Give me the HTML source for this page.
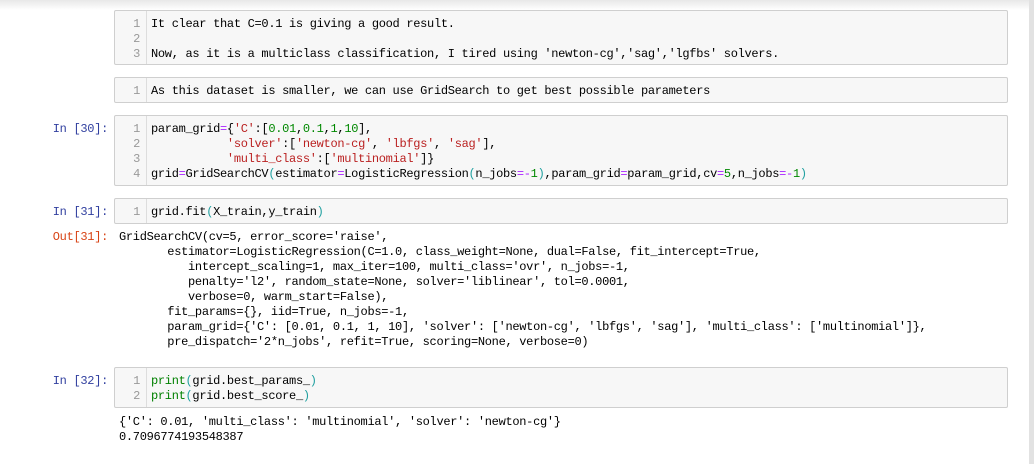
<!DOCTYPE html>
<html><head><style>
body{margin:0;width:1034px;height:464px;background:#fff;position:relative;overflow:hidden;font-family:"Liberation Mono",monospace;font-size:12px;letter-spacing:-0.3px;}
.top{position:absolute;left:0;top:0;width:1029px;height:10px;background:linear-gradient(#e8e8e8,#fff);}
.rb{position:absolute;right:0;top:0;width:5px;height:464px;background:#e2e2e2;}
.cell{position:absolute;left:114px;width:894px;background:#f7f7f7;border:1px solid #cfcfcf;border-radius:2px;box-sizing:border-box;}
.gut{position:absolute;left:0;top:0;bottom:0;width:31px;border-right:1px solid #ddd;}
.ln{position:absolute;right:6px;color:#999;text-align:right;line-height:15px;white-space:pre;}
.code{position:absolute;left:36px;line-height:15px;white-space:pre;color:#000;}
.lbl{position:absolute;right:926px;line-height:15px;color:#303F9F;white-space:pre;}
.out{color:#D84315;}
.o{position:absolute;left:119px;line-height:15px;white-space:pre;color:#000;}
.s{color:#BA2121}.n{color:#080}.p{color:#AA22FF}.b{color:#20a0a0}.k{color:#008000}
</style></head><body>
<div class="top"></div><div class="rb"></div>

<div class="cell" style="top:10px;height:55px"><div class="gut"><div class="ln" style="top:6px">1
2
3</div></div><div class="code" style="top:6px">It clear that C=0.1 is giving a good result.

Now, as it is a multiclass classification, I tired using 'newton-cg','sag','lgfbs' solvers.</div></div>

<div class="cell" style="top:77px;height:26px"><div class="gut"><div class="ln" style="top:6px">1</div></div><div class="code" style="top:6px">As this dataset is smaller, we can use GridSearch to get best possible parameters</div></div>

<div class="lbl" style="top:122px">In [30]:</div>
<div class="cell" style="top:115px;height:71px"><div class="gut"><div class="ln" style="top:6px">1
2
3
4</div></div><div class="code" style="top:6px">param_grid<span class="p">=</span>{<span class="s">'C'</span>:[<span class="n">0.01</span>,<span class="n">0.1</span>,<span class="n">1</span>,<span class="n">10</span>],
           <span class="s">'solver'</span>:[<span class="s">'newton-cg'</span>, <span class="s">'lbfgs'</span>, <span class="s">'sag'</span>],
           <span class="s">'multi_class'</span>:[<span class="s">'multinomial'</span>]}
grid<span class="p">=</span>GridSearchCV<span class="b">(</span>estimator<span class="p">=</span>LogisticRegression<span class="b">(</span>n_jobs<span class="p">=-</span><span class="n">1</span><span class="b">)</span>,param_grid<span class="p">=</span>param_grid,cv<span class="p">=</span><span class="n">5</span>,n_jobs<span class="p">=-</span><span class="n">1</span><span class="b">)</span></div></div>

<div class="lbl" style="top:205px">In [31]:</div>
<div class="cell" style="top:198px;height:26px"><div class="gut"><div class="ln" style="top:6px">1</div></div><div class="code" style="top:6px">grid.fit<span class="b">(</span>X_train,y_train<span class="b">)</span></div></div>

<div class="lbl out" style="top:230px">Out[31]:</div>
<div class="o" style="top:230px">GridSearchCV(cv=5, error_score='raise',
       estimator=LogisticRegression(C=1.0, class_weight=None, dual=False, fit_intercept=True,
          intercept_scaling=1, max_iter=100, multi_class='ovr', n_jobs=-1,
          penalty='l2', random_state=None, solver='liblinear', tol=0.0001,
          verbose=0, warm_start=False),
       fit_params={}, iid=True, n_jobs=-1,
       param_grid={'C': [0.01, 0.1, 1, 10], 'solver': ['newton-cg', 'lbfgs', 'sag'], 'multi_class': ['multinomial']},
       pre_dispatch='2*n_jobs', refit=True, scoring=None, verbose=0)</div>

<div class="lbl" style="top:374px">In [32]:</div>
<div class="cell" style="top:367px;height:41px"><div class="gut"><div class="ln" style="top:6px">1
2</div></div><div class="code" style="top:6px"><span class="k">print</span><span class="b">(</span>grid.best_params_<span class="b">)</span>
<span class="k">print</span><span class="b">(</span>grid.best_score_<span class="b">)</span></div></div>

<div class="o" style="top:415px">{'C': 0.01, 'multi_class': 'multinomial', 'solver': 'newton-cg'}
0.7096774193548387</div>
</body></html>
